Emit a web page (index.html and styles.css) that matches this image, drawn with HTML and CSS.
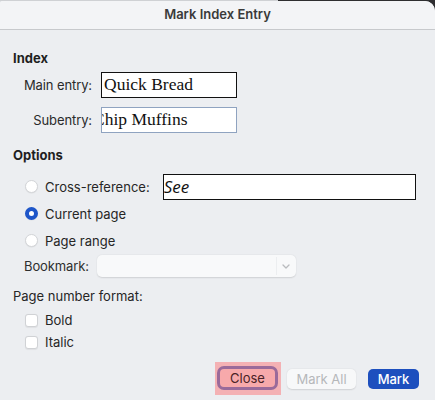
FILE: index.html
```html
<!DOCTYPE html>
<html>
<head>
<meta charset="utf-8">
<link rel="stylesheet" href="styles.css">
</head>
<body>
<div class="window">
  <div class="titlebar">Mark Index Entry</div>
  <div class="content">
    <div class="heading">Index</div>
    <div class="field-grid">
      <div class="label">Main entry:</div>
      <div class="textbox dark"><span class="serif">Quick Bread</span></div>
      <div class="label">Subentry:</div>
      <div class="textbox blue"><span class="serif clipped">Chip Muffins</span></div>
    </div>

    <div class="heading options-head">Options</div>
    <div class="radio-row">
      <span class="radio"></span>
      <span class="radio-label">Cross-reference:</span>
      <div class="textbox dark xref"><span class="italic">See</span></div>
    </div>
    <div class="radio-row">
      <span class="radio on"></span>
      <span class="radio-label">Current page</span>
    </div>
    <div class="radio-row">
      <span class="radio"></span>
      <span class="radio-label">Page range</span>
    </div>
    <div class="bookmark-row">
      <div class="label bm-label">Bookmark:</div>
      <div class="select">
        <span class="chev">
          <svg width="10" height="7" viewBox="0 0 10 7"><path d="M2 2 L5 5 L8 2" fill="none" stroke="#b9bbbe" stroke-width="1.3" stroke-linecap="round" stroke-linejoin="round"/></svg>
        </span>
      </div>
    </div>
    <div class="pnf">Page number format:</div>
    <div class="check-row"><span class="checkbox"></span><span>Bold</span></div>
    <div class="check-row"><span class="checkbox"></span><span>Italic</span></div>

    <div class="buttons">
      <div class="highlight"><button class="btn close">Close</button></div>
      <button class="btn disabled">Mark All</button>
      <button class="btn primary">Mark</button>
    </div>
  </div>
</div>
</body>
</html>
```

FILE: styles.css
```css
html, body {
  margin: 0;
  padding: 0;
}
body {
  width: 435px;
  height: 400px;
  overflow: hidden;
  background: linear-gradient(to right, #cfd1d4 0, #cfd1d4 64%, #2e2e30 64%);
  font-family: "Inter", "Roboto", "Liberation Sans", sans-serif;
  font-size: 13px;
  color: #262626;
}
.window {
  margin-top: 1px;
  height: 399px;
  background: #eceef1;
  border-top-right-radius: 10px;
  border-top-left-radius: 2px;
  overflow: hidden;
}
.titlebar {
  height: 28px;
  line-height: 27px;
  background: #f3f4f6;
  border-bottom: 1px solid #c7c9cc;
  text-align: center;
  font-weight: 600;
  font-size: 13px;
  color: #3a3a3a;
}
.content {
  padding: 20px 16px 0 13px;
}
.heading {
  font-weight: 700;
  height: 16px;
  line-height: 16px;
  color: #1f1f1f;
}
.field-grid {
  margin-top: 6px;
  display: grid;
  grid-template-columns: 79px 136px;
  column-gap: 9px;
  row-gap: 9px;
  align-items: center;
}
.label {
  text-align: right;
  color: #2a2a2a;
  letter-spacing: -0.1px;
}
.textbox {
  height: 26px;
  box-sizing: border-box;
  background: #fff;
  overflow: hidden;
  white-space: nowrap;
  display: flex;
  align-items: center;
}
.textbox.dark {
  border: 1px solid #111;
}
.textbox.blue {
  border: 1px solid #8fa3c0;
}
.serif {
  font-family: "Liberation Serif", "Times New Roman", serif;
  font-size: 17.5px;
  color: #111;
  padding-left: 2px;
  margin-top: -2px;
}
.serif.clipped {
  margin-left: -11px;
}
.italic {
  font-family: "Open Sans", "DejaVu Sans", sans-serif;
  font-style: italic;
  font-size: 17px;
  color: #111;
  padding-left: 0;
  margin-top: -1px;
}
.options-head {
  margin-top: 14px;
}
.radio-row {
  height: 27px;
  display: flex;
  align-items: center;
  padding-left: 12px;
}
.options-head + .radio-row {
  margin-top: 10px;
}
.radio {
  width: 13px;
  height: 13px;
  box-sizing: border-box;
  border-radius: 50%;
  background: #fff;
  border: 1px solid #d3d5d8;
  box-shadow: 0 0.5px 1px rgba(0,0,0,0.08);
  margin-right: 7px;
  flex: none;
}
.radio.on {
  background: #fff;
  border: 4px solid #1e56c9;
}
.radio-label {
  color: #262626;
}
.xref {
  margin-left: 13px;
  width: 253px;
}
.bookmark-row {
  margin-top: 1px;
  height: 22px;
  display: flex;
  align-items: center;
}
.bm-label {
  width: 76px;
  color: #2e2e2e;
}
.select {
  margin-left: 8px;
  width: 199px;
  height: 22px;
  box-sizing: border-box;
  background: #f8f9fa;
  border-radius: 5px;
  box-shadow: 0 0.5px 1.5px rgba(0,0,0,0.12);
  display: flex;
  justify-content: flex-end;
  align-items: center;
}
.chev {
  width: 17px;
  height: 18px;
  margin-right: 2px;
  border-left: 1px solid #eceef0;
  display: flex;
  align-items: center;
  justify-content: center;
}
.pnf {
  margin-top: 11px;
  height: 16px;
  line-height: 16px;
}
.check-row {
  height: 22px;
  display: flex;
  align-items: center;
  padding-left: 12px;
}
.pnf + .check-row {
  margin-top: 5px;
}
.checkbox {
  width: 13px;
  height: 13px;
  box-sizing: border-box;
  background: #fff;
  border: 1px solid #d0d2d5;
  border-radius: 3px;
  box-shadow: 0 0.5px 1px rgba(0,0,0,0.06);
  margin-right: 7px;
  flex: none;
}
.buttons {
  margin-top: 9px;
  display: flex;
  justify-content: flex-end;
  align-items: center;
}
.highlight {
  width: 66px;
  height: 33px;
  box-sizing: border-box;
  background: #f4b1b4;
  padding: 4px 3px 0 2px;
  margin-right: 6px;
}
.btn {
  font-family: inherit;
  font-size: 13px;
  height: 20px;
  box-sizing: border-box;
  border: none;
  border-radius: 5px;
  padding: 0;
  margin: 0;
  line-height: 20px;
}
.btn.close {
  width: 61px;
  height: 24px;
  background: #f7a9ab;
  border: 3px solid #9a6a9a;
  border-radius: 7px;
  color: #4a2226;
  line-height: 18px;
}
.btn.disabled {
  width: 69px;
  background: #f7f8f9;
  color: #b5b7ba;
  box-shadow: 0 0.5px 1.5px rgba(0,0,0,0.12);
  margin-right: 12px;
}
.btn.primary {
  width: 51px;
  background: #1d4fbe;
  color: #fff;
  font-weight: 500;
}
```
